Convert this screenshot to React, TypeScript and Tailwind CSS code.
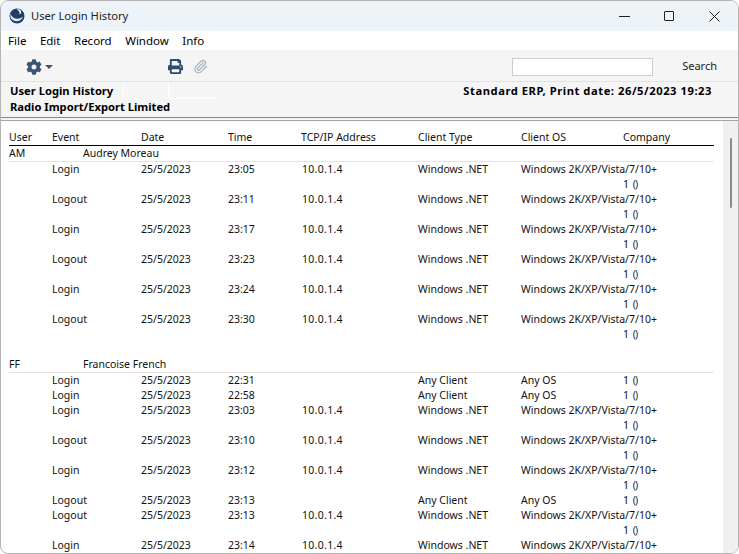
import { Paperclip } from 'lucide-react';
import { FaCog, FaPrint } from 'react-icons/fa';

type Row = { event: string; time: string; net: boolean; cut?: boolean };

const amRows: Row[] = [
  { event: 'Login', time: '23:05', net: true },
  { event: 'Logout', time: '23:11', net: true },
  { event: 'Login', time: '23:17', net: true },
  { event: 'Logout', time: '23:23', net: true },
  { event: 'Login', time: '23:24', net: true },
  { event: 'Logout', time: '23:30', net: true },
];

const ffRows: Row[] = [
  { event: 'Login', time: '22:31', net: false },
  { event: 'Login', time: '22:58', net: false },
  { event: 'Login', time: '23:03', net: true },
  { event: 'Logout', time: '23:10', net: true },
  { event: 'Login', time: '23:12', net: true },
  { event: 'Logout', time: '23:13', net: false },
  { event: 'Logout', time: '23:13', net: true },
  { event: 'Login', time: '23:14', net: true, cut: true },
];

const cols = 'grid grid-cols-[43px_89px_87px_73px_117px_103px_102px_1fr] h-[15px] leading-[15px] whitespace-nowrap';

function Company() {
  return (
    <span>
      1 <span className="ml-[1px] tracking-[-1px] text-[#12305a]">()</span>
    </span>
  );
}

function DataRow({ row }: { row: Row }) {
  return (
    <>
      <div className={cols}>
        <span />
        <span>{row.event}</span>
        <span>25/5/2023</span>
        <span>{row.time}</span>
        <span className="pl-[1px] tracking-[0.3px]">{row.net ? '10.0.1.4' : ''}</span>
        <span>{row.net ? 'Windows .NET' : 'Any Client'}</span>
        {row.net ? <span>Windows 2K/XP/Vista/7/10+</span> : <span>Any OS</span>}
        {row.net ? <span /> : <Company />}
      </div>
      {row.net && !row.cut && (
        <div className={cols}>
          <span className="col-start-8">
            <Company />
          </span>
        </div>
      )}
    </>
  );
}

function UserHead({ code, name }: { code: string; name: string }) {
  return (
    <div className="flex h-[16px] leading-[15px] border-b border-[#e8e2de]">
      <span className="w-[74px]">{code}</span>
      <span>{name}</span>
    </div>
  );
}

export default function App() {
  return (
    <div
      className="w-[739px] h-[554px] overflow-hidden flex flex-col bg-white border border-[#b4b4b4] rounded-[8px] text-[#111]"
      style={{ fontFamily: '"Noto Sans", "Liberation Sans", sans-serif' }}
    >
      <div className="h-[30px] shrink-0 flex items-center bg-[#eef3f8] pl-[8px]">
        <svg width="16" height="16" viewBox="0 0 17 17" className="mr-[6px]">
          <circle cx="8.5" cy="8.5" r="8" fill="#1f3f66" />
          <path d="M1.5 6 C4 12 10 13 15 9 C13 15 5 16 1.5 10 Z" fill="#dfe8f0" />
          <path d="M8 1 C11 3 12 5 11 7 C13.5 6 13.5 3 11 1.5 Z" fill="#fff" />
        </svg>
        <span className="text-[11.2px] text-[#222]">User Login History</span>
        <div className="ml-auto flex items-center">
          <span className="w-[45px] flex justify-center">
            <span className="w-[11px] h-[1px] bg-[#222]" />
          </span>
          <span className="w-[45px] flex justify-center pr-[1px]">
            <span className="w-[10px] h-[10px] border border-[#222] rounded-[1px]" />
          </span>
          <svg width="46" height="11" viewBox="0 0 46 11" fill="none" stroke="#222" strokeWidth="1">
            <path d="M17.5 0.5 L27.5 10.5 M27.5 0.5 L17.5 10.5" />
          </svg>
        </div>
      </div>

      <div className="h-[19px] shrink-0 flex items-center gap-[13.5px] bg-white pl-[7px] text-[11.5px] text-black">
        <span>File</span>
        <span>Edit</span>
        <span>Record</span>
        <span>Window</span>
        <span>Info</span>
      </div>

      <div className="h-[32px] shrink-0 flex items-center bg-[#f5f5f5] border-b border-[#e2e2e2] pl-[25px] pr-[21px] pt-[2px]">
        <FaCog size={16} color="#3a5674" />
        <span className="ml-[3px] w-0 h-0 border-x-[4px] border-x-transparent border-t-[4px] border-t-[#3a5674]" />
        <FaPrint size={15} color="#2c4c6e" className="ml-[115px]" />
        <Paperclip size={15} className="ml-[10px]" stroke="#a9b4bd" />
        <span className="ml-auto w-[141px] h-[18px] bg-white border border-[#cdcdcd]" />
        <span className="ml-[29px] text-[11px] text-[#222]">Search</span>
      </div>

      <div className="h-[36px] shrink-0 bg-[#f5f5f5] border-b border-[#8f857d] pl-[9px] pr-[26px] pt-[1px] flex justify-between font-bold text-[11.2px] leading-[15px] text-black">
        <div className="flex flex-col">
          <div className="flex">
            <span className="w-[113px]">User Login History</span>
            <span className="w-[46px] h-[15px] border-x border-white" />
            <span className="w-[50px] h-[16px] border-b border-white" />
          </div>
          <span>Radio Import/Export Limited</span>
        </div>
        <span className="tracking-[0.55px]">Standard ERP, Print date: 26/5/2023 19:23</span>
      </div>

      <div className="h-[2px] shrink-0 bg-[#f5f5f5] border-b border-[#a9a39e] box-content" />

      <div className="flex-1 min-h-0 flex">
        <div className="w-[722px] overflow-hidden pl-[8px] pr-[9px] pt-[9px] text-[10.5px]">
          <div className={`${cols} border-b border-black h-[16px]`}>
            <span>User</span>
            <span>Event</span>
            <span>Date</span>
            <span>Time</span>
            <span>TCP/IP Address</span>
            <span>Client Type</span>
            <span>Client OS</span>
            <span>Company</span>
          </div>
          <UserHead code="AM" name="Audrey Moreau" />
          {amRows.map((row, i) => (
            <DataRow key={i} row={row} />
          ))}
          <div className="h-[15px]" />
          <UserHead code="FF" name="Francoise French" />
          {ffRows.map((row, i) => (
            <DataRow key={i} row={row} />
          ))}
        </div>
        <div className="w-[15px] bg-[#f0f0f0] pt-[17px] flex justify-center">
          <span className="w-[2px] h-[70px] bg-[#8a8a8a] rounded-full" />
        </div>
      </div>
    </div>
  );
}
